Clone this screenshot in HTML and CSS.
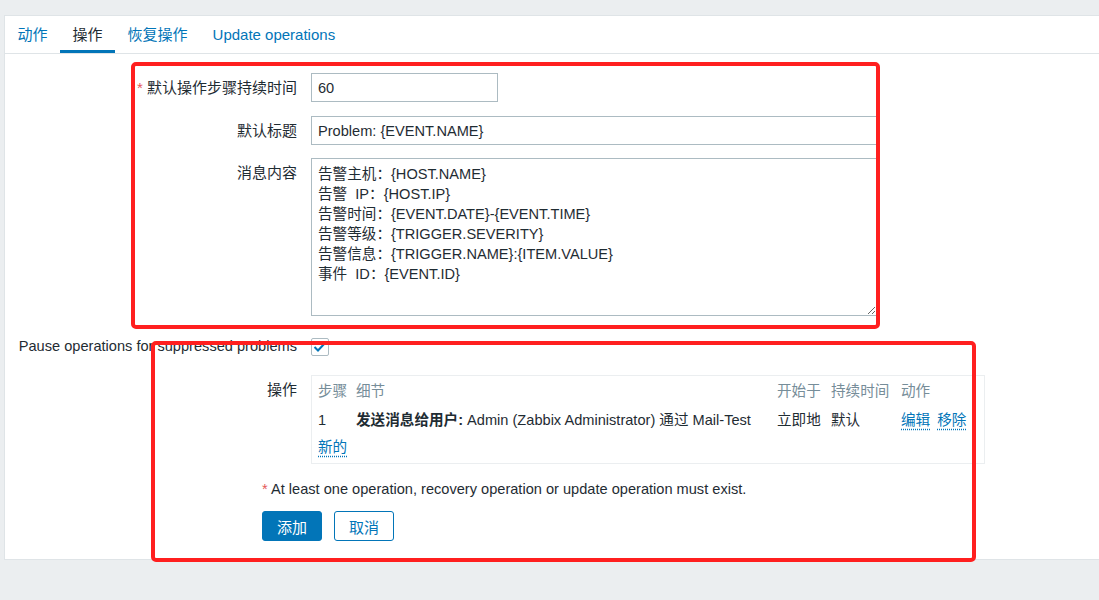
FILE: index.html
```html
<!DOCTYPE html>
<html lang="zh-CN">

<head>
    <meta charset="UTF-8">
    <meta name="viewport" content="width=device-width, initial-scale=1.0">
    <title>动作 - 操作</title>
    <link rel="stylesheet" href="styles.css">
</head>

<body>
    <main class="page">
        <nav class="tabs">
            <a class="tab">动作</a>
            <a class="tab tab-active">操作</a>
            <a class="tab">恢复操作</a>
            <a class="tab">Update operations</a>
        </nav>

        <form class="form">
            <div class="row row-1">
                <label class="label label-cjk" for="stepDuration"><span class="req">*</span> 默认操作步骤持续时间</label>
                <div class="field"><input class="input input-short" id="stepDuration" type="text" value="60"></div>
            </div>
            <div class="row row-2">
                <label class="label label-cjk" for="defSubject">默认标题</label>
                <div class="field"><input class="input input-wide" id="defSubject" type="text" value="Problem: {EVENT.NAME}"></div>
            </div>
            <div class="row row-3">
                <label class="label label-cjk" for="defMessage">消息内容</label>
                <div class="field">
                    <textarea class="textarea" id="defMessage">告警主机：{HOST.NAME}
告警  IP：{HOST.IP}
告警时间：{EVENT.DATE}-{EVENT.TIME}
告警等级：{TRIGGER.SEVERITY}
告警信息：{TRIGGER.NAME}:{ITEM.VALUE}
事件  ID：{EVENT.ID}</textarea>
                </div>
            </div>
            <div class="row row-4">
                <label class="label">Pause operations for suppressed problems</label>
                <div class="field">
                    <span class="checkbox">
                        <svg width="14" height="12" viewBox="0 0 14 12"><polyline points="1.5,6 5,9.5 12.5,1.5" fill="none" stroke="#0275b8" stroke-width="2"/></svg>
                    </span>
                </div>
            </div>
            <div class="row row-5">
                <label class="label label-cjk">操作</label>
                <div class="field">
                    <div class="ops">
                        <div class="ops-row ops-head">
                            <span>步骤</span><span>细节</span><span>开始于</span><span>持续时间</span><span>动作</span>
                        </div>
                        <div class="ops-row ops-item">
                            <span>1</span>
                            <span><b>发送消息给用户:</b> Admin (Zabbix Administrator) 通过 Mail-Test</span>
                            <span>立即地</span>
                            <span>默认</span>
                            <span class="ops-actions"><a class="link">编辑</a><a class="link">移除</a></span>
                        </div>
                        <div class="ops-new"><a class="link">新的</a></div>
                    </div>
                </div>
            </div>
            <div class="footer">
                <p class="note"><span class="req">*</span> At least one operation, recovery operation or update operation must exist.</p>
                <div class="buttons">
                    <button class="btn btn-main" type="button">添加</button>
                    <button class="btn btn-alt" type="button">取消</button>
                </div>
            </div>
        </form>
    </main>

    <div class="mark mark-top"></div>
    <div class="mark mark-bottom"></div>
</body>

</html>
```

FILE: styles.css
```css
body {
    font-family: "Liberation Sans", Arial, "Noto Sans CJK SC", sans-serif;
    font-size: 14.6px;
    color: #1f2c33;
    background-color: #ebeef0;
    margin: 0;
    padding-top: 15px;
}

.page {
    margin-left: 4px;
    width: 1110px;
    background-color: #ffffff;
    border: 1px solid #dfe4e7;
    box-sizing: border-box;
}

/* tabs */
.tabs {
    display: flex;
    height: 37px;
    border-bottom: 1px solid #dfe4e7;
}

.tab {
    padding: 0 12.5px;
    font-size: 15px;
    line-height: 37px;
    height: 34px;
    color: #0275b8;
    cursor: pointer;
    border-bottom: 3px solid transparent;
}

.tab-active {
    color: #1f2c33;
    border-bottom-color: #0275b8;
}

/* form */
.form {
    padding: 19px 0 18px;
}

.row {
    display: grid;
    grid-template-columns: 280px 1fr;
    column-gap: 14px;
    padding-left: 12px;
    margin-bottom: 14px;
}

.row-2 {
    margin-bottom: 13px;
}

.row-3 {
    margin-bottom: 16px;
}

.label {
    text-align: right;
    line-height: 29px;
    white-space: nowrap;
}

.label-cjk {
    font-size: 15px;
}

.req {
    color: #e45959;
}

.input,
.textarea {
    font-family: inherit;
    font-size: 14.6px;
    color: #1f2c33;
    border: 1px solid #acbbc2;
    border-radius: 0;
    box-sizing: border-box;
    padding: 0 6px;
    outline: none;
}

.input {
    height: 29px;
    display: block;
}

.input-short {
    width: 187px;
}

.input-wide {
    width: 566px;
}

.textarea {
    display: block;
    width: 566px;
    height: 158px;
    padding-top: 5px;
    line-height: 20px;
    resize: both;
}

.row-4 .field {
    display: flex;
    align-items: center;
}

.checkbox {
    width: 18px;
    height: 18px;
    border: 1px solid #acbbc2;
    border-radius: 2px;
    box-sizing: border-box;
    display: flex;
    align-items: center;
    justify-content: center;
}

/* operations list */
.ops {
    width: 674px;
    border: 1px solid #ebeef0;
    box-sizing: border-box;
    padding: 4px 6px 7px;
}

.ops-row {
    display: grid;
    grid-template-columns: 38px 421px 54px 70px 1fr;
    white-space: nowrap;
}

.ops-head {
    color: #768d99;
    line-height: 22px;
}

.ops-item {
    line-height: 36px;
}

.ops-actions {
    display: flex;
    gap: 7px;
}

.ops-new {
    line-height: 18px;
}

.link {
    color: #0275b8;
    cursor: pointer;
    text-decoration: underline dotted;
    text-underline-offset: 4px;
}

/* footer */
.footer {
    padding-left: 257px;
}

.note {
    margin: 16px 0 13px;
    line-height: 18px;
}

.buttons {
    display: flex;
    gap: 12px;
}

.btn {
    font-family: inherit;
    font-size: 15px;
    width: 60px;
    height: 30px;
    border-radius: 3px;
    border: 1px solid #0275b8;
    cursor: pointer;
}

.btn-main {
    background-color: #0275b8;
    color: #ffffff;
}

.btn-alt {
    background-color: #ffffff;
    color: #0275b8;
}

/* red annotation frames drawn over the screenshot */
.mark {
    position: absolute;
    border: 4px solid #ff1f1f;
    border-radius: 5px;
    box-sizing: border-box;
    pointer-events: none;
}

.mark-top {
    left: 131px;
    top: 62px;
    width: 749px;
    height: 267px;
}

.mark-bottom {
    left: 151px;
    top: 341px;
    width: 825px;
    height: 221px;
}
```
